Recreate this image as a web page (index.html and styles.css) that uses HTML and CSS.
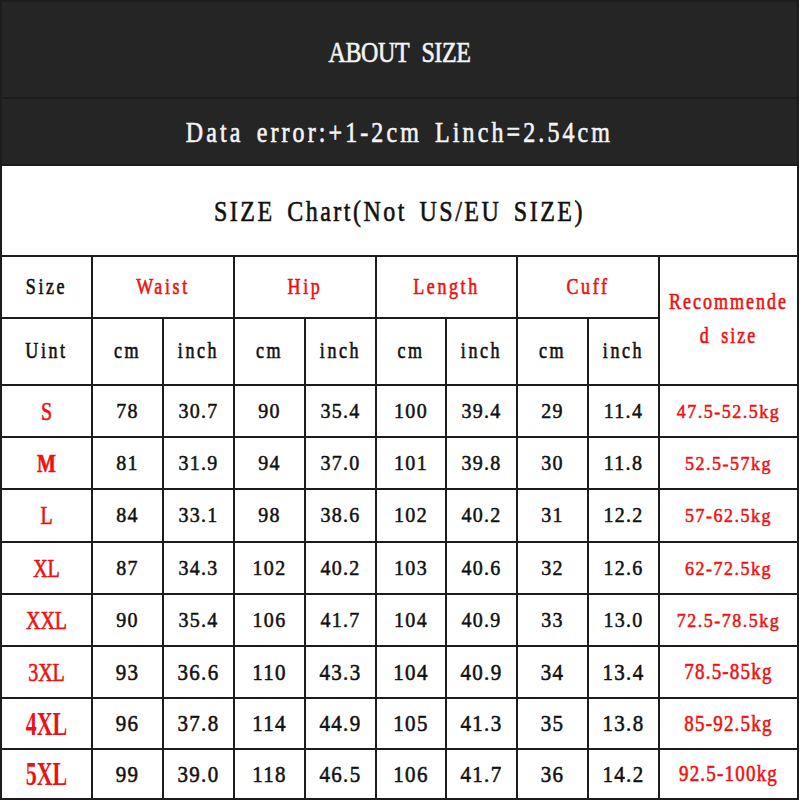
FILE: index.html
```html
<!DOCTYPE html>
<html>
<head>
<meta charset="utf-8">
<link rel="stylesheet" href="styles.css">
</head>
<body>
<table class="chart">
  <colgroup>
    <col class="c-size"><col class="c-n"><col class="c-n"><col class="c-n"><col class="c-n"><col class="c-n70"><col class="c-n"><col class="c-n"><col class="c-n"><col class="c-rec">
  </colgroup>
  <tr class="r-about dark"><td colspan="10"><span class="t title t-about">ABOUT SIZE</span></td></tr>
  <tr class="r-err dark"><td colspan="10"><span class="t title t-err">Data error:+1-2cm Linch=2.54cm</span></td></tr>
  <tr class="r-chart"><td colspan="10"><span class="t title t-chart">SIZE Chart(Not US/EU SIZE)</span></td></tr>
  <tr class="r-h1">
    <td><span class="t head">Size</span></td>
    <td colspan="2"><span class="t head red">Waist</span></td>
    <td colspan="2"><span class="t head red">Hip</span></td>
    <td colspan="2"><span class="t head red">Length</span></td>
    <td colspan="2"><span class="t head red">Cuff</span></td>
    <td rowspan="2"><span class="t head red rec-h">Recommende<br>d size</span></td>
  </tr>
  <tr class="r-h2">
    <td><span class="t head">Uint</span></td>
    <td><span class="t head">cm</span></td><td><span class="t head">inch</span></td>
    <td><span class="t head">cm</span></td><td><span class="t head">inch</span></td>
    <td><span class="t head">cm</span></td><td><span class="t head">inch</span></td>
    <td><span class="t head">cm</span></td><td><span class="t head">inch</span></td>
  </tr>
  <tr class="r-d52"><td><span class="t sz red">S</span></td><td><span class="t num">78</span></td><td><span class="t num">30.7</span></td><td><span class="t num">90</span></td><td><span class="t num">35.4</span></td><td><span class="t num">100</span></td><td><span class="t num">39.4</span></td><td><span class="t num">29</span></td><td><span class="t num">11.4</span></td><td><span class="t rec red">47.5-52.5kg</span></td></tr>
  <tr class="r-d52"><td><span class="t sz red bold">M</span></td><td><span class="t num">81</span></td><td><span class="t num">31.9</span></td><td><span class="t num">94</span></td><td><span class="t num">37.0</span></td><td><span class="t num">101</span></td><td><span class="t num">39.8</span></td><td><span class="t num">30</span></td><td><span class="t num">11.8</span></td><td><span class="t rec red">52.5-57kg</span></td></tr>
  <tr class="r-d53"><td><span class="t sz red">L</span></td><td><span class="t num">84</span></td><td><span class="t num">33.1</span></td><td><span class="t num">98</span></td><td><span class="t num">38.6</span></td><td><span class="t num">102</span></td><td><span class="t num">40.2</span></td><td><span class="t num">31</span></td><td><span class="t num">12.2</span></td><td><span class="t rec red">57-62.5kg</span></td></tr>
  <tr class="r-d52"><td><span class="t sz red">XL</span></td><td><span class="t num">87</span></td><td><span class="t num">34.3</span></td><td><span class="t num">102</span></td><td><span class="t num">40.2</span></td><td><span class="t num">103</span></td><td><span class="t num">40.6</span></td><td><span class="t num">32</span></td><td><span class="t num">12.6</span></td><td><span class="t rec red">62-72.5kg</span></td></tr>
  <tr class="r-d52"><td><span class="t sz red">XXL</span></td><td><span class="t num">90</span></td><td><span class="t num">35.4</span></td><td><span class="t num">106</span></td><td><span class="t num">41.7</span></td><td><span class="t num">104</span></td><td><span class="t num">40.9</span></td><td><span class="t num">33</span></td><td><span class="t num">13.0</span></td><td><span class="t rec red">72.5-78.5kg</span></td></tr>
  <tr class="r-d52"><td><span class="t sz red">3XL</span></td><td><span class="t num big">93</span></td><td><span class="t num big">36.6</span></td><td><span class="t num big">110</span></td><td><span class="t num big">43.3</span></td><td><span class="t num big">104</span></td><td><span class="t num big">40.9</span></td><td><span class="t num big">34</span></td><td><span class="t num big">13.4</span></td><td><span class="t rec red big">78.5-85kg</span></td></tr>
  <tr class="r-d51"><td><span class="t sz red lg">4XL</span></td><td><span class="t num big">96</span></td><td><span class="t num big">37.8</span></td><td><span class="t num big">114</span></td><td><span class="t num big">44.9</span></td><td><span class="t num big">105</span></td><td><span class="t num big">41.3</span></td><td><span class="t num big">35</span></td><td><span class="t num big">13.8</span></td><td><span class="t rec red big">85-92.5kg</span></td></tr>
  <tr class="r-d50"><td><span class="t sz red lg">5XL</span></td><td><span class="t num big">99</span></td><td><span class="t num big">39.0</span></td><td><span class="t num big">118</span></td><td><span class="t num big">46.5</span></td><td><span class="t num big">106</span></td><td><span class="t num big">41.7</span></td><td><span class="t num big">36</span></td><td><span class="t num big">14.2</span></td><td><span class="t rec red big">92.5-100kg</span></td></tr>
</table>
</body>
</html>
```

FILE: styles.css
```css
html, body {
  margin: 0;
  padding: 0;
  background: #ffffff;
}

.chart {
  border-collapse: collapse;
  table-layout: fixed;
  width: 798px;
  font-family: "Liberation Serif", "DejaVu Serif", serif;
  color: #111111;
}

.chart td {
  border: 2px solid #1c1c1c;
  padding: 0;
  text-align: center;
  vertical-align: middle;
  overflow: hidden;
}

.c-size { width: 91px; }
.c-n { width: 71px; }
.c-n70 { width: 70px; }
.c-rec { width: 139px; }

.dark td {
  background: #252525;
  color: #f4f4f4;
}

.r-about { height: 97px; }
.r-err { height: 67px; }
.r-chart { height: 91px; }
.r-h1 { height: 62px; }
.r-h2 { height: 67px; }
.r-d53 { height: 53px; }
.r-d52 { height: 52px; }
.r-d51 { height: 51px; }
.r-d50 { height: 50px; }

.t {
  display: inline-block;
  white-space: nowrap;
  -webkit-text-stroke: 0.5px currentColor;
}

.title {
  font-size: 24px;
  transform: scaleY(1.2);
}

.t-about {
  letter-spacing: -0.4px;
  word-spacing: 7px;
  margin-top: 6px;
}

.t-err {
  letter-spacing: 3.1px;
  word-spacing: 4px;
  margin-top: 2px;
}

.t-chart {
  letter-spacing: 2.5px;
  word-spacing: 4px;
  margin-top: 2px;
}

.head {
  font-size: 18px;
  line-height: 27px;
  letter-spacing: 2.6px;
  transform: scaleY(1.25);
}

.rec-h {
  letter-spacing: 2px;
  word-spacing: 4px;
  margin-top: -4px;
}

.num {
  font-size: 20px;
  letter-spacing: 1.3px;
  transform: scaleY(1.02);
}

.num.big {
  font-size: 21px;
  transform: scaleY(1.12);
}

.rec {
  font-size: 18px;
  letter-spacing: 1.5px;
  transform: scaleY(1.1);
}

.rec.big {
  font-size: 19px;
  letter-spacing: 1.2px;
  transform: scaleY(1.2);
}

.sz {
  font-size: 20px;
  transform: scaleY(1.3);
}

.sz.bold {
  font-weight: bold;
}

.sz.lg {
  font-size: 22px;
  font-weight: bold;
  transform: scaleY(1.5);
  -webkit-text-stroke: 0;
}

.red {
  color: #ee1111;
}
```
